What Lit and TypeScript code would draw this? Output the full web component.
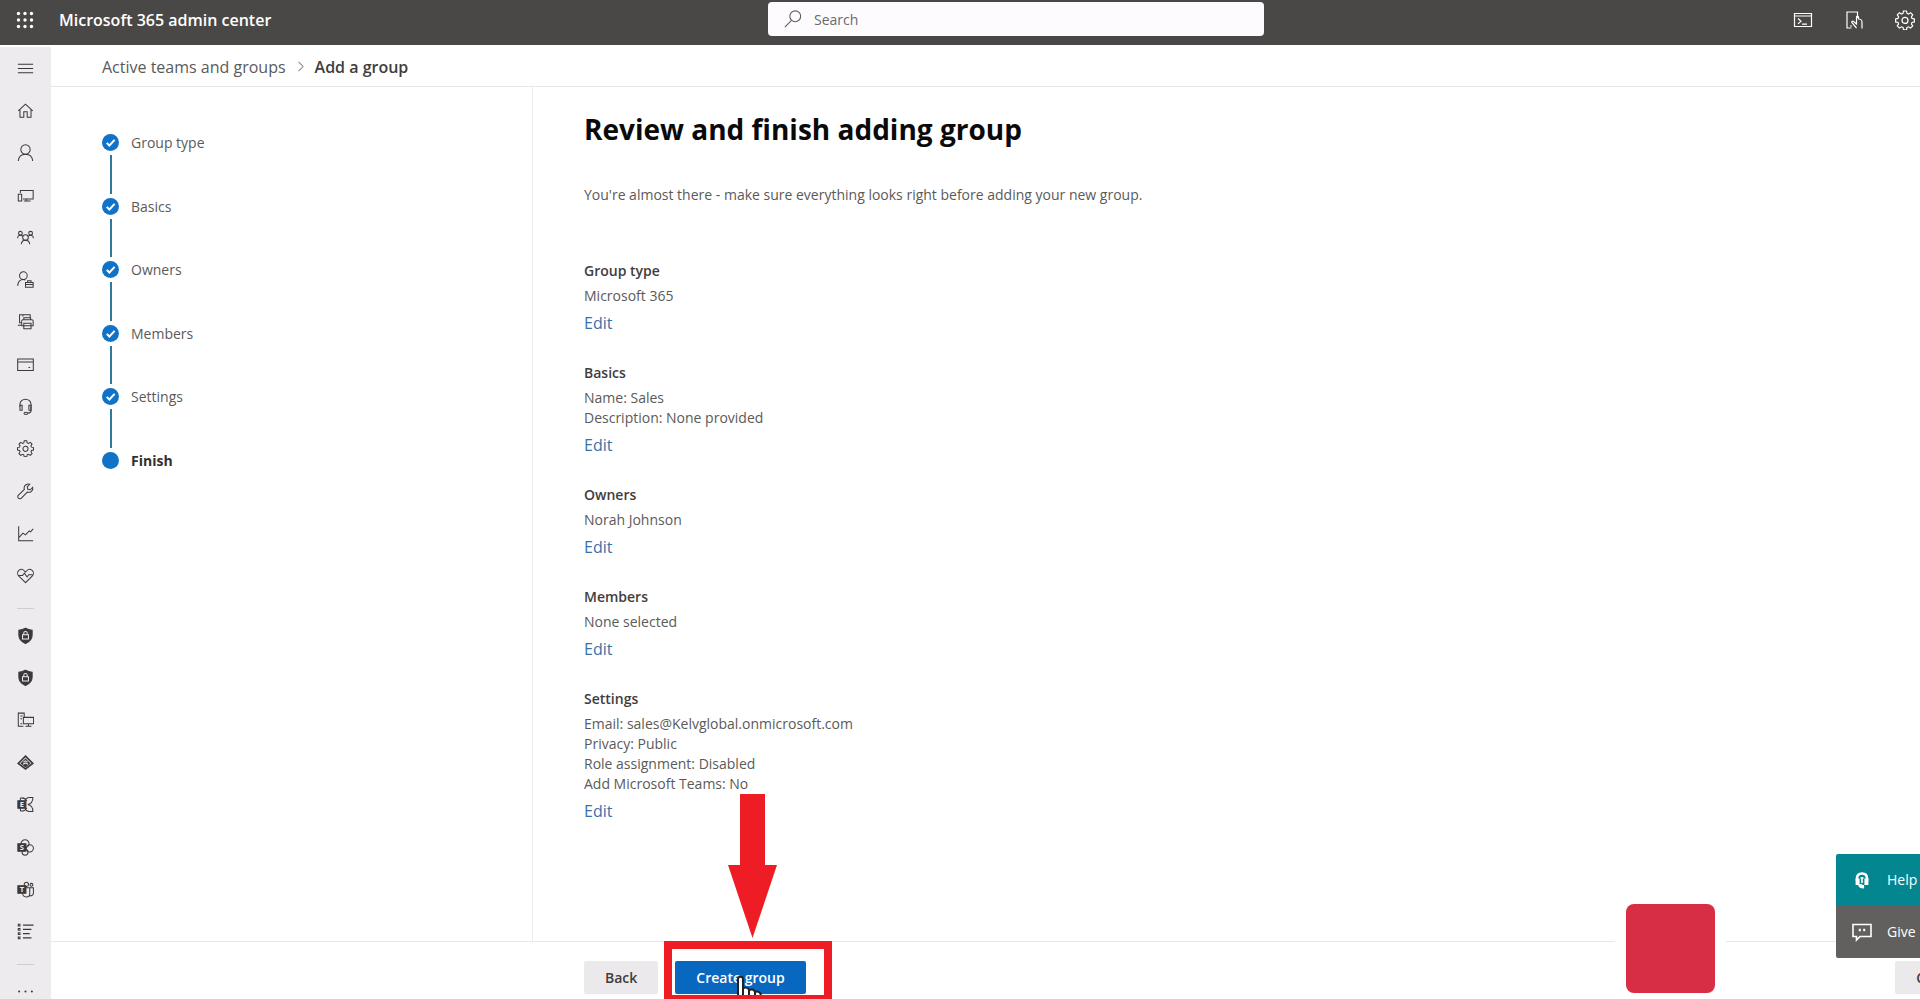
import { LitElement, html, svg, css } from "lit";
import { customElement } from "lit/decorators.js";

const appTile = (letter: string) => svg`
  <path fill="currentColor" d="M1 5.500h9.500v9H1z"/>
  <text class="tile-letter" x="5.700" y="13" text-anchor="middle">${letter}</text>`;

const icons: Record<string, unknown> = {
  menu: svg`<path d="M1 5h18M1 10h18M1 15h18"/>`,
  home: svg`<path d="M1.500 10.500 10 2.500l8.500 8M3.500 9v9H8v-6.500h4V18h4.500V9"/>`,
  user: svg`<circle cx="10" cy="6.500" r="5.500"/><path d="M1.500 20c.5-5 4-8 8.500-8s8 3 8.500 8"/>`,
  devices: svg`<path d="M4 7V4h15v10H7M11 14v2.500M8 16.500h8"/><path d="M1.500 8.500H5.500v8h-4z"/>`,
  team: svg`<circle cx="10" cy="10" r="3.300"/><path d="M5 18c.3-3 2-4.700 5-4.700s4.700 1.700 5 4.700"/><circle cx="4" cy="5" r="2.200"/><circle cx="16" cy="5" r="2.200"/><path d="M.8 11c0-2.300 1-3.700 3.200-3.700 1.300 0 2.200.5 2.700 1.200M19.200 11c0-2.300-1-3.700-3.200-3.700-1.300 0-2.200.5-2.700 1.200"/>`,
  role: svg`<circle cx="7.500" cy="5.500" r="4.500"/><path d="M.8 17.500c.3-4.500 2.700-7.500 6.700-7.500 1 0 1.700.1 2.500.5"/><path d="M10 13.500h9V19h-9zM12.500 13.500v-2h4v2M10 16h9"/>`,
  printer: svg`<path d="M7 4V2H3v9.500h2M1 14.500h4M8 8V5.500h8V8M7 2h8.500v3.500"/><path d="M7 8h10.500c.8 0 1.500.7 1.500 1.500V15H5.500V9.500C5.500 8.700 6.200 8 7 8zM8 12h8.500v6.500H8z"/>`,
  card: svg`<path d="M.8 3.500h18.400v13.500H.8zM.8 7h18.400M13.500 13.500h2"/>`,
  headset: svg`<path d="M3.500 10V7.500c0-3.500 3-6 6.500-6s6.500 2.500 6.500 6V15c0 1.500-1.500 2.700-3.500 2.700"/><path d="M3.500 8.500H6V14.500H3.500zM14 8.500h2.500v6H14z"/><ellipse cx="10.500" cy="18" rx="2.300" ry="1.300"/>`,
  gear: svg`<path d="M8.500 1h3l.5 2.400 1.500.6 2.100-1.300 2.100 2.100L16.400 6.900l.6 1.500 2.400.5v3l-2.400.5-.6 1.500 1.300 2.100-2.100 2.100-2.100-1.300-1.500.6-.5 2.400h-3L8 17.400l-1.500-.6-2.100 1.300-2.100-2.100 1.300-2.100-.6-1.500-2.400-.5v-3L3 8.400l.6-1.500-1.300-2.100 2.100-2.100L6.500 4 8 3.400z"/><circle cx="10" cy="10.400" r="3"/>`,
  wrench: svg`<path d="m18.500 5-3 3-2.800-.7-.7-2.800 3-3c-2.700-.9-6 .4-6.600 3.700-.1.800 0 1.700.3 2.400l-7 6.700c-1 1-1 2.700-.1 3.600 1 1 2.600.9 3.600-.2l6.900-7c3.800 1.100 7.200-1.800 6.400-5.700z"/>`,
  chart: svg`<path d="M2 1.500v17h17M2.500 14.500 7 9.500l3 2.200L14.500 7l1.500 1 3-3.500"/>`,
  heart: svg`<path d="M10 18.500 1.900 10.500c-1.700-2-1.500-4.900.3-6.500 2-1.600 4.700-1.300 6.300.4L10 6l1.500-1.600c1.600-1.700 4.300-2 6.300-.4 1.800 1.600 2 4.500.3 6.500z"/><path d="M1.900 10h4.600l2.200-2.700 3.200 4.400 1.900-2.700h4.700"/>`,
  shield: svg`<path fill="currentColor" d="M10 1.500c2.400 1.500 4.900 2.200 7.800 2.200v6c0 4.300-2.800 7.500-7.800 9.800-5-2.300-7.800-5.500-7.800-9.800v-6C5.100 3.700 7.600 3 10 1.500z"/><path class="knockout" d="M6.500 9h7v5h-7zM8 9V7.200c0-2.600 4-2.600 4 0V9"/>`,
  endpoint: svg`<path d="M7.500 18H1.500V2.500h7V7.500M4 6h2.500M4 9h2M4 15h2"/><path d="M7.500 7.500h12v7.500h-12zM13.500 15v3M10 18h7"/>`,
  entra: svg`<path stroke-width="2" d="M10 2.500 18.500 11 10 17.500 1.500 11z"/><path fill="currentColor" d="m10 6 5 5-5 4-5-4z"/><path class="knockout" d="m7.500 9.500 2.500-1.500 2.500 1.500M7 12l3-1.500L13 12"/>`,
  exchange: svg`<path d="M9.500 5c1-2.300 3-3.200 5.200-3.200h4c0 4.500-2.200 7.500-6 8.200 3.800.7 6 3.700 6 8.200h-4c-2.200 0-4.200-.9-5.200-3.200M11.500 6c-2-3.500-5-4.200-7.500-3.500v3M4 14.500v3c3 .7 5.500-.3 7.500-3.500"/>${appTile("E")}`,
  sharepoint: svg`<circle cx="9.500" cy="5.500" r="4.700"/><circle cx="15" cy="11" r="4.300"/><circle cx="9.500" cy="15.500" r="3.500"/>${appTile("S")}`,
  teams: svg`<circle cx="11" cy="4" r="2.500"/><circle cx="17" cy="4.500" r="1.700"/><path d="M10 8h5v7c0 2-1.700 3.700-4 3.700s-4-1.200-4.500-3.700M15 8h4.300v6c0 2-1.500 3.500-4.500 3.500"/>${appTile("T")}`,
  list: svg`<path d="M7 2.500h12.500M7 7.500h10M7 12.500h8M7 17.500h10"/><path d="M1.500 1.500h2v2h-2zM1.500 6.500h2v2h-2zM1.500 11.500h2v2h-2zM1.500 16.500h2v2h-2z"/>`,
  more: svg`<g fill="currentColor" stroke="none"><circle cx="2.500" cy="10" r="1.200"/><circle cx="10" cy="10" r="1.200"/><circle cx="17.500" cy="10" r="1.200"/></g>`,
  waffle: svg`<g fill="currentColor" stroke="none">${[3.5, 10, 16.5].map((y) =>
    [3.5, 10, 16.5].map((x) => svg`<circle cx=${x} cy=${y} r="1.700"/>`)
  )}</g>`,
  search: svg`<circle cx="12.500" cy="7" r="6"/><path d="M8.300 11.500 1 19"/>`,
  shell: svg`<path d="M1.500 3.500h17v13h-17zM1.500 6h17M5 8.500l3 2.700-3 2.700M9 14.200h5"/>`,
  touch: svg`<path d="M7.500 18H3V2h10.500v6M6 16h2"/><path d="M18 18.500V12c0-2-2-3-3.500-3V7c0-1.200-2-1.200-2 0v7l-3-2.500c-1-.9-2.400.2-1.500 1.200l4.500 5.300"/>`,
  support: svg`<path stroke-width="2.600" d="M5 11V8.500C5 5.300 7 3.500 10 3.500s5 1.800 5 5V11"/><path fill="currentColor" d="M4.200 9H7v5.500H4.200zM13 9h2.800v5.500H13zM6.500 14.500c.5 2.500 2 3.500 5 3.500v-2.500c-1.500 0-2-.3-2.500-1z"/><path stroke-width="1.600" d="M10 7v6M8.500 8h3"/>`,
  feedback: svg`<path stroke-width="1.600" d="M1 2.500h18v12H8L4.500 18v-3.500H1z"/><path stroke-width="2.400" d="M6.800 8h2M11.200 8h2"/>`,
  check: svg`<path stroke-width="2.600" d="m5 10.500 3.500 3.500 7-7.500"/>`,
  chevron: svg`<path stroke-width="1.600" d="m7 3 7 7-7 7"/>`,
};

const icon = (name: string) =>
  html`<svg class="icon" viewBox="0 0 20 20" aria-hidden="true">${icons[name]}</svg>`;

const primaryNav: [string, string][] = [
  ["menu", "Navigation menu"],
  ["home", "Home"],
  ["user", "Users"],
  ["devices", "Devices"],
  ["team", "Teams and groups"],
  ["role", "Roles"],
  ["printer", "Resources"],
  ["card", "Billing"],
  ["headset", "Support"],
  ["gear", "Settings"],
  ["wrench", "Setup"],
  ["chart", "Reports"],
  ["heart", "Health"],
];
const adminNav: [string, string][] = [
  ["shield", "Security"],
  ["shield", "Compliance"],
  ["endpoint", "Endpoint Manager"],
  ["entra", "Identity"],
  ["exchange", "Exchange"],
  ["sharepoint", "SharePoint"],
  ["teams", "Teams"],
  ["list", "All admin centers"],
];
const steps = ["Group type", "Basics", "Owners", "Members", "Settings", "Finish"];
const sections: { title: string; lines: string[] }[] = [
  { title: "Group type", lines: ["Microsoft 365"] },
  { title: "Basics", lines: ["Name: Sales", "Description: None provided"] },
  { title: "Owners", lines: ["Norah Johnson"] },
  { title: "Members", lines: ["None selected"] },
  {
    title: "Settings",
    lines: [
      "Email: sales@Kelvglobal.onmicrosoft.com",
      "Privacy: Public",
      "Role assignment: Disabled",
      "Add Microsoft Teams: No",
    ],
  },
];

@customElement("app-root")
export class AppRoot extends LitElement {
  static styles = css`
    :host {
      display: flex;
      flex-direction: column;
      position: relative;
      height: 100vh;
      overflow: hidden;
      background: #fff;
      color: #5b5a59;
      font: 14px/20px "Open Sans", "Noto Sans", sans-serif;
    }
    * { box-sizing: border-box; }
    button, input { font: inherit; color: inherit; border: 0; background: none; padding: 0; }
    a { text-decoration: none; color: inherit; }
    h1, h2, p, ol, ul { margin: 0; padding: 0; list-style: none; }
    .icon {
      display: block;
      flex: none;
      width: 20px;
      height: 20px;
      fill: none;
      stroke: currentColor;
      stroke-width: 1.2;
    }
    .header {
      flex: none;
      display: grid;
      grid-template-columns: 768fr 496fr 656fr;
      height: 45px;
      background: #4a4846;
      color: #fff;
    }
    .brand { display: flex; align-items: center; padding: 0 0 6px 15px; gap: 24px; }
    .brand-name { font-size: 16px; font-weight: 600; white-space: nowrap; }
    .search {
      display: flex;
      align-items: center;
      height: 34px;
      margin-top: 2px;
      padding: 0 16px;
      gap: 12px;
      border-radius: 4px;
      background: #fdfbfe;
      color: #605e5c;
    }
    .search-input { flex: 1; min-width: 0; padding-top: 2px; outline: 0; }
    .search-input::placeholder { color: #6b696b; opacity: 1; }
    .search .icon { width: 18px; height: 18px; }
    .tools { display: flex; justify-content: flex-end; padding: 0 5px 6px 0; gap: 31px; align-items: center; }

    .body { flex: 1; min-height: 0; display: flex; padding-top: 2px; }
    .rail { flex: none; width: 51px; background: #edebee; color: #3b393c; overflow: hidden; }
    .rail-group { display: grid; grid-auto-rows: 1fr; }
    .rail-group.main-links { height: 550px; }
    .rail-group.admin-links { height: 339px; }
    .rail-item { display: grid; }
    .rail-link { display: flex; align-items: center; justify-content: center; width: 100%; }
    .rail .icon { width: 17px; height: 17px; }
    .rail-rule { height: 17px; padding: 11px 17px 0; }
    .rail-rule::before { content: ""; display: block; border-top: 1px solid #cfcdd0; }
    .rail-more { height: 42px; }
    .knockout { stroke: #edebee; }
    .tile-letter { fill: #edebee; stroke: none; font-size: 9px; font-weight: 700; }

    .page { flex: 1; min-width: 0; display: flex; flex-direction: column; }
    .crumbs {
      flex: none;
      display: flex;
      align-items: center;
      height: 40px;
      padding: 0 51px;
      gap: 8px;
      border-bottom: 1px solid #e9e8e9;
      font-size: 16px;
    }
    .crumbs .icon { width: 13px; height: 13px; color: #8a888a; }
    .crumb-current { color: #3f3d3e; font-weight: 600; }
    .columns { flex: 1; min-height: 0; display: flex; }
    .steps-panel { flex: none; width: 482px; padding: 47px 51px; border-right: 1px solid #eeedee; }
    .steps { display: flex; flex-direction: column; height: 335px; }
    .step { flex: 1; display: grid; grid-template-columns: 17px 1fr; grid-template-rows: 17px 1fr; column-gap: 12px; }
    .step:last-child { flex: none; color: #323031; font-weight: 700; }
    .dot { display: grid; place-items: center; width: 17px; height: 17px; border-radius: 50%; background: #1173c7; color: #fff; }
    .dot .icon { width: 15px; height: 15px; }
    .step-name { line-height: 17px; }
    .track { width: 2px; margin: 4px auto; background: #2f7a9c; }

    .review { flex: 1; padding: 22px 51px 0; }
    .title { font-size: 28px; line-height: 40px; font-weight: 700; color: #0b0a0b; }
    .intro { margin-top: 36px; }
    .sections { display: grid; gap: 28px; margin-top: 56px; justify-items: start; }
    .section-title { font-size: 14px; line-height: 20px; font-weight: 600; color: #3f3d3e; margin-bottom: 5px; }
    .edit { display: inline-block; margin-top: 5px; font-size: 16px; line-height: 24px; color: #3a72a8; }

    .actions {
      flex: none;
      display: flex;
      align-items: flex-start;
      height: 58px;
      padding: 19px 0 0 533px;
      gap: 17px;
      border-top: 1px solid #e9e8e9;
    }
    .button {
      height: 33px;
      padding: 0 21px;
      border-radius: 2px;
      background: #ebe9ec;
      color: #3f3d3e;
      font-weight: 600;
      white-space: nowrap;
    }
    .button.primary { background: #0868c0; color: #fff; }
    .button.cancel { flex: none; margin: 0 -62px 0 auto; }
    .create { position: relative; }
    .callout { position: absolute; top: -20px; left: -11px; width: 168px; height: 62px; border: 8px solid #ee1c25; }
    .arrow { position: absolute; top: -167px; left: 53px; width: 49px; height: 144px; fill: #ee1c25; }
    .pointer { position: absolute; top: 15px; left: 60px; width: 32px; height: 32px; }
    .help { position: absolute; right: 0; bottom: 41px; width: 84px; overflow: hidden; border-radius: 2px 0 0 2px; }
    .help-item {
      display: flex;
      align-items: center;
      width: 100%;
      height: 52px;
      padding-left: 16px;
      gap: 15px;
      background: #62605f;
      color: #fff;
      white-space: nowrap;
    }
    .help-item.support-link { background: #038690; }
    .help .icon { width: 20px; height: 20px; }
    .stamp { position: absolute; right: 205px; bottom: 6px; width: 89px; height: 89px; border-radius: 8px; background: #d72d45; box-shadow: 0 0 0 11px #fff; }
  `;

  private railLink([name, label]: [string, string]) {
    return html`<li class="rail-item"><button class="rail-link" aria-label=${label}>${icon(name)}</button></li>`;
  }

  render() {
    return html`
      <header class="header">
        <div class="brand">
          <button aria-label="App launcher">${icon("waffle")}</button>
          <a class="brand-name" href="#home">Microsoft 365 admin center</a>
        </div>
        <label class="search">
          ${icon("search")}
          <input class="search-input" type="search" placeholder="Search" aria-label="Search" />
        </label>
        <div class="tools">
          <button aria-label="Cloud Shell">${icon("shell")}</button>
          <button aria-label="Mobile app">${icon("touch")}</button>
          <button aria-label="Settings">${icon("gear")}</button>
        </div>
      </header>
      <div class="body">
        <nav class="rail" aria-label="Admin">
          <ul class="rail-group main-links">${primaryNav.map((n) => this.railLink(n))}</ul>
          <div class="rail-rule"></div>
          <ul class="rail-group admin-links">${adminNav.map((n) => this.railLink(n))}</ul>
          <div class="rail-rule"></div>
          <button class="rail-link rail-more" aria-label="Show more">${icon("more")}</button>
        </nav>
        <div class="page">
          <nav class="crumbs" aria-label="Breadcrumb">
            <a href="#groups">Active teams and groups</a>${icon("chevron")}
            <span class="crumb-current" aria-current="page">Add a group</span>
          </nav>
          <div class="columns">
            <aside class="steps-panel">
              <ol class="steps">
                ${steps.map((name, i) => {
                  const last = i === steps.length - 1;
                  return html`<li class="step">
                    <span class="dot">${last ? "" : icon("check")}</span>
                    <span class="step-name">${name}</span>
                    ${last ? "" : html`<span class="track"></span>`}
                  </li>`;
                })}
              </ol>
            </aside>
            <main class="review">
              <h1 class="title">Review and finish adding group</h1>
              <p class="intro">You're almost there - make sure everything looks right before adding your new group.</p>
              <div class="sections">
                ${sections.map(
                  (s) => html`<section>
                    <h2 class="section-title">${s.title}</h2>
                    ${s.lines.map((l) => html`<p>${l}</p>`)}
                    <a class="edit" href="#edit" aria-label="Edit ${s.title}">Edit</a>
                  </section>`
                )}
              </div>
            </main>
          </div>
          <footer class="actions">
            <button class="button">Back</button>
            <div class="create">
              <button class="button primary">Create group</button>
              <svg class="arrow" viewBox="0 0 49 144" aria-hidden="true"><path d="M12 0h25v71h12L24.500 144 0 71h12z" /></svg>
              <svg class="pointer" viewBox="0 0 32 32" aria-hidden="true">
                <path fill="#fff" stroke="#222" stroke-width="2" d="M3 32V3c0-3 5-3 5 0v10c1-2 5-2 6 1 2-1 5-1 6 2 3-1 6 0 6 4v12z" />
                <path stroke="#222" stroke-width="2" d="M8 12v10M14 14v8M20 16v6" />
              </svg>
              <div class="callout"></div>
            </div>
            <button class="button cancel">Cancel</button>
          </footer>
        </div>
      </div>
      <div class="stamp"></div>
      <div class="help">
        <button class="help-item support-link">${icon("support")}Help</button>
        <button class="help-item">${icon("feedback")}Give</button>
      </div>
    `;
  }
}
